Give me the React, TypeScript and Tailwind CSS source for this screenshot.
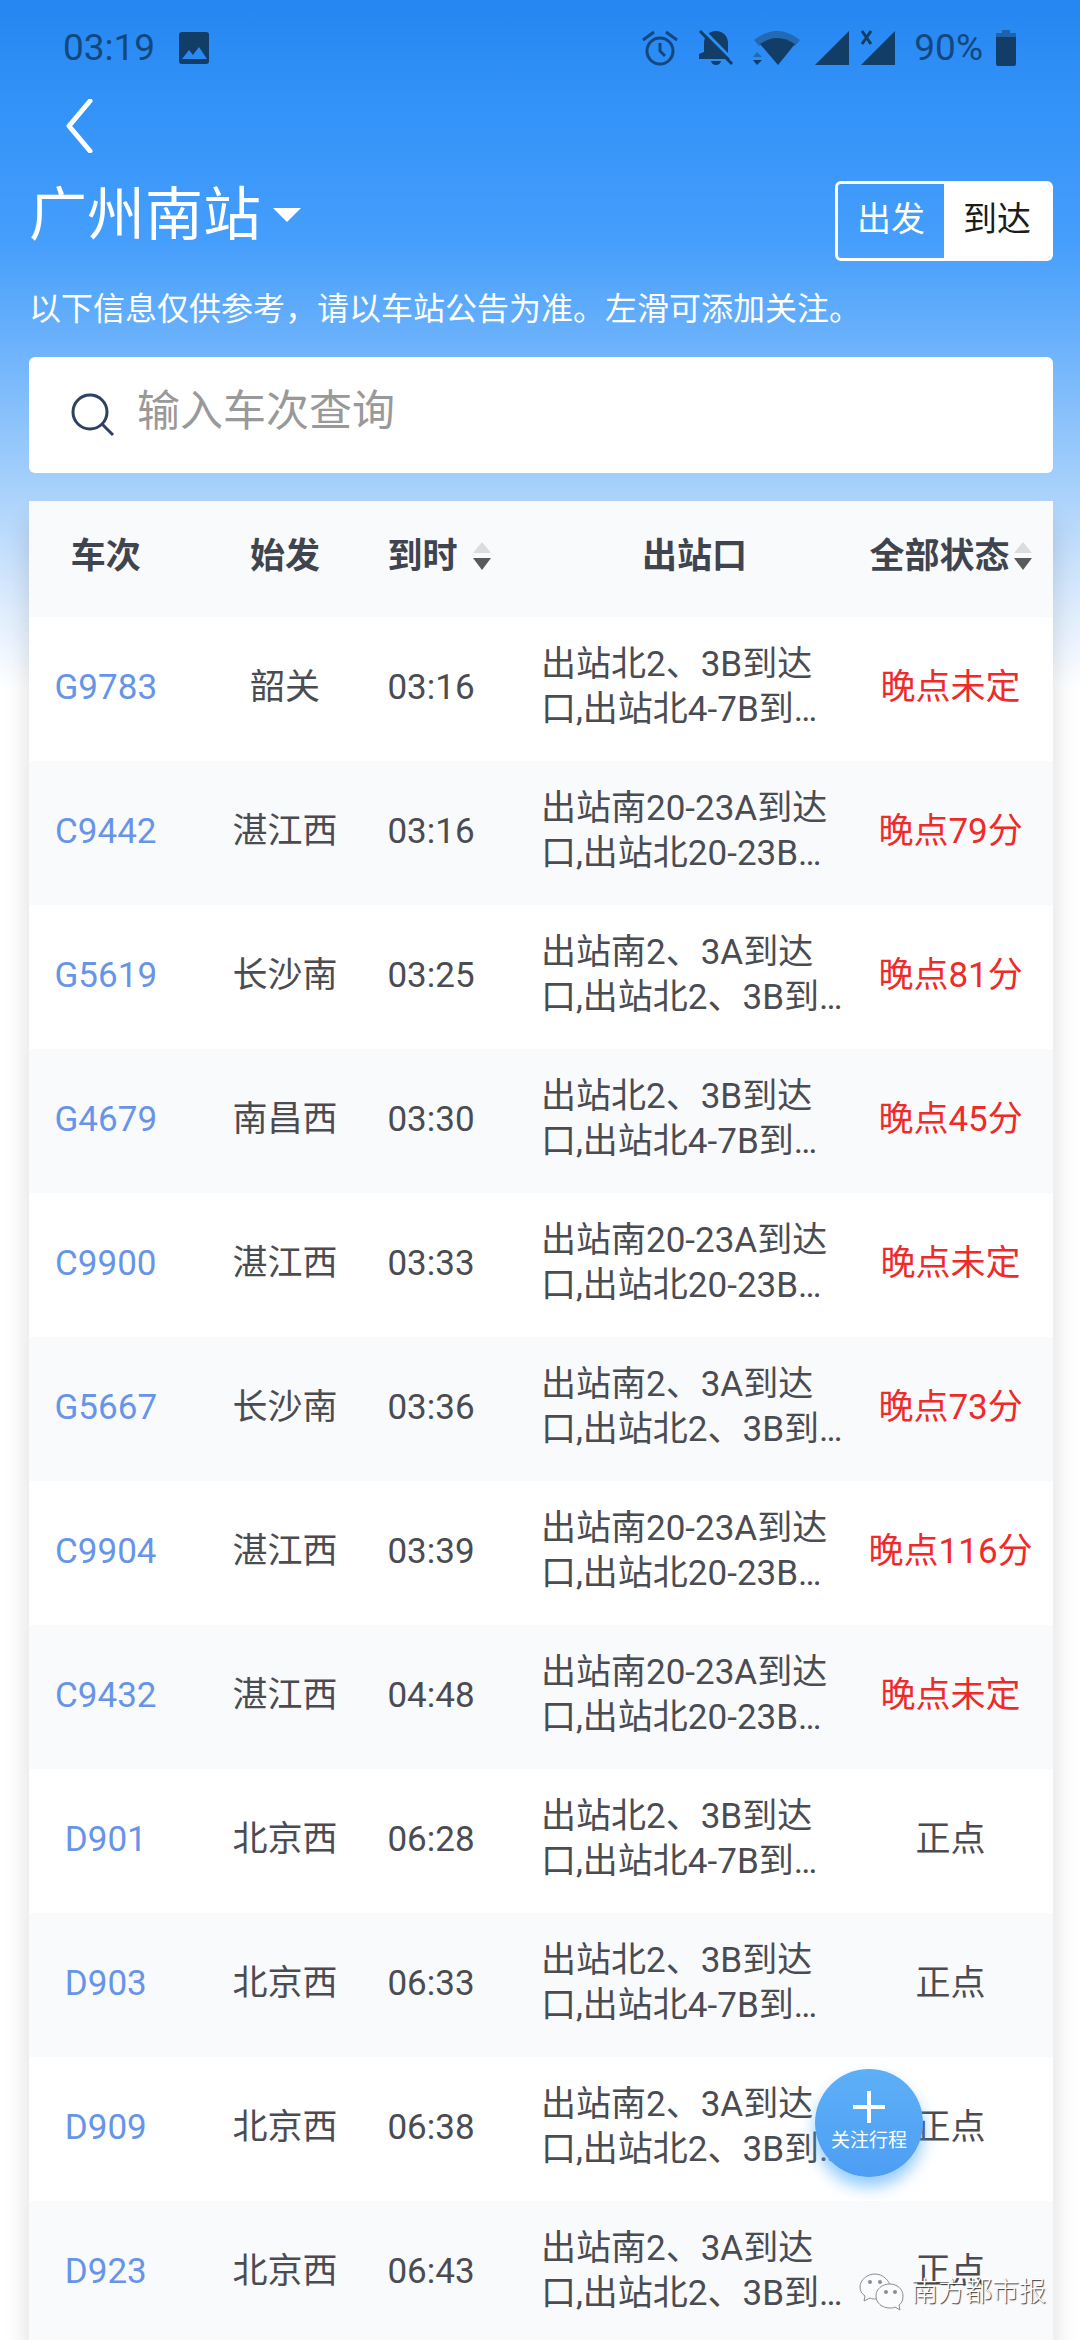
import { useState } from "react";

type Mode = "departure" | "arrival";

interface Train {
  no: string;
  from: string;
  time: string;
  exit: string;
  status: string;
}

const NORTH_A = "出站北2、3B到达口,出站北4-7B到…";
const SOUTH_A = "出站南20-23A到达口,出站北20-23B…";
const SOUTH_B = "出站南2、3A到达口,出站北2、3B到…";

const TRAINS: Train[] = [
  { no: "G9783", from: "韶关", time: "03:16", exit: NORTH_A, status: "晚点未定" },
  { no: "C9442", from: "湛江西", time: "03:16", exit: SOUTH_A, status: "晚点79分" },
  { no: "G5619", from: "长沙南", time: "03:25", exit: SOUTH_B, status: "晚点81分" },
  { no: "G4679", from: "南昌西", time: "03:30", exit: NORTH_A, status: "晚点45分" },
  { no: "C9900", from: "湛江西", time: "03:33", exit: SOUTH_A, status: "晚点未定" },
  { no: "G5667", from: "长沙南", time: "03:36", exit: SOUTH_B, status: "晚点73分" },
  { no: "C9904", from: "湛江西", time: "03:39", exit: SOUTH_A, status: "晚点116分" },
  { no: "C9432", from: "湛江西", time: "04:48", exit: SOUTH_A, status: "晚点未定" },
  { no: "D901", from: "北京西", time: "06:28", exit: NORTH_A, status: "正点" },
  { no: "D903", from: "北京西", time: "06:33", exit: NORTH_A, status: "正点" },
  { no: "D909", from: "北京西", time: "06:38", exit: SOUTH_B, status: "正点" },
  { no: "D923", from: "北京西", time: "06:43", exit: SOUTH_B, status: "正点" },
];

export default function App() {
  const [mode, setMode] = useState<Mode>("arrival");

  return (
    <div className="relative h-dvh overflow-hidden bg-[linear-gradient(180deg,#2586f2_0px,#3292f8_100px,#459efc_240px,#6cb2fb_345px,#a6d0fb_485px,#d6e8fd_590px,#ffffff_690px)] bg-white font-[Roboto,'Noto_Sans_CJK_SC',sans-serif] text-[#4a4c52]">
      <StatusBar />
      <header className="pl-[29px] pr-[27px] text-white">
        <button type="button" aria-label="返回" className="ml-9 mt-7 block">
          <svg className="h-[54px] w-7" viewBox="0 0 28 54" fill="none" stroke="currentColor" strokeWidth="5">
            <path d="M25 2 4 27l21 25" strokeLinecap="round" strokeLinejoin="round" />
          </svg>
        </button>
        <div className="mt-7 flex items-start justify-between">
          <button type="button" className="flex items-center gap-3 text-[58px] leading-[68px]">
            <h1>广州南站</h1>
            <svg className="h-[14px] w-7" viewBox="0 0 28 14" fill="currentColor">
              <path d="M0 0h28L14 14z" />
            </svg>
          </button>
          <ModeToggle mode={mode} onChange={setMode} />
        </div>
        <p className="mt-6 text-[32px] leading-[48px]">
          以下信息仅供参考，请以车站公告为准。左滑可添加关注。
        </p>
      </header>

      <main className="pl-[29px] pr-[27px]">
        <label className="mt-6 flex h-[116px] items-center rounded-md bg-white pl-[42px]">
          <svg className="h-11 w-11 shrink-0" viewBox="0 0 44 44" fill="none" stroke="#2f4160" strokeWidth="3">
            <circle cx="19" cy="19" r="17" />
            <path d="m31 31 11 11" />
          </svg>
          <span className="sr-only">车次</span>
          <input
            type="text"
            placeholder="输入车次查询"
            className="ml-[22px] w-full bg-transparent pb-2 text-[43px] leading-[64px] outline-none placeholder:text-[#999999]"
          />
        </label>
        <TrainTable trains={TRAINS} />
      </main>

      <button
        type="button"
        className="absolute bottom-[163px] right-[157px] flex h-[108px] w-[108px] flex-col items-center rounded-full bg-linear-to-b from-[#5db0f6] to-[#4d9ef4] pt-[22px] text-white shadow-[0_10px_16px_#4aa8ff99]"
      >
        <svg className="h-8 w-8" viewBox="0 0 32 32" stroke="currentColor" strokeWidth="4">
          <path d="M16 0v32M0 16h32" />
        </svg>
        <span className="mt-1 text-[19px] leading-7">关注行程</span>
      </button>
      <Watermark />
    </div>
  );
}

function StatusBar() {
  return (
    <div className="flex h-[71px] items-end justify-between pb-[1px] pl-[63px] pr-[63px] text-[37px] leading-[44px] text-[#13487f]">
      <div className="flex items-center gap-6">
        <span>03:19</span>
        <svg className="h-8 w-[30px]" viewBox="0 0 30 32">
          <rect width="30" height="32" rx="3" fill="#123d66" />
          <path d="m3 27 7-9 4 5 6-8 8 12z" fill="#2a8af4" />
        </svg>
      </div>
      <div className="flex items-center">
        <svg className="h-9 w-9" viewBox="0 0 36 36" fill="none" stroke="#13487f" strokeWidth="3">
          <circle cx="18" cy="21" r="13" />
          <path d="M18 13v8l5 5M1 10 12 2M35 10 24 2" />
        </svg>
        <svg className="ml-5 h-9 w-9" viewBox="0 0 36 36" fill="#123d66">
          <path d="M18 1c7 0 12 5 12 12v12l5 3v1H1v-5l5-2V13C6 6 11 1 18 1zM13 31h10q-1 4-5 4t-5-4z" />
          <path d="M5 0 38 33" stroke="#2d8ff6" strokeWidth="3" />
          <path d="M2 1 34 34" stroke="#123d66" strokeWidth="3" />
        </svg>
        <svg className="ml-[18px] h-9 w-[50px]" viewBox="0 0 50 36" fill="#123d66">
          <path d="M2 10Q25-8 48 10L43 16Q25 2 7 16z" fill="#2469b3" />
          <path d="M8 14Q25 2 43 14L26 35z" />
          <path d="M1 30h9l-5 5z" />
          <path d="M1 27h9l-5-5z" fill="#2469b3" />
        </svg>
        <svg className="ml-3 h-9 w-9" viewBox="0 0 36 36" fill="#123d66">
          <path d="M35 1v34H1z" />
        </svg>
        <svg className="ml-[10px] h-9 w-9" viewBox="0 0 36 36" fill="#123d66">
          <path d="M35 1v34H1z" />
          <path d="m2 1 9 13M11 1 2 14" stroke="#123d66" strokeWidth="3" />
        </svg>
        <span className="ml-[18px]">90%</span>
        <svg className="ml-3 h-9 w-[22px]" viewBox="0 0 22 36">
          <path d="M7 0h8v3h6v6H1V3h6z" fill="#1f62a8" />
          <path d="M1 7h20v27q0 2-2 2H3q-2 0-2-2z" fill="#123d66" />
        </svg>
      </div>
    </div>
  );
}

interface ModeToggleProps {
  mode: Mode;
  onChange: (mode: Mode) => void;
}

function ModeToggle({ mode, onChange }: ModeToggleProps) {
  const options: { key: Mode; label: string }[] = [
    { key: "departure", label: "出发" },
    { key: "arrival", label: "到达" },
  ];

  return (
    <div className="flex h-20 w-[218px] overflow-hidden rounded-md border-[3px] border-white">
      {options.map((o) => (
        <button
          key={o.key}
          type="button"
          aria-pressed={mode === o.key}
          onClick={() => onChange(o.key)}
          className={`flex-1 pb-1 text-[34px] ${mode === o.key ? "bg-white text-[#1c1c1c]" : "text-white"}`}
        >
          {o.label}
        </button>
      ))}
    </div>
  );
}

function SortIcon() {
  return (
    <svg className="h-7 w-[18px] shrink-0" viewBox="0 0 18 28">
      <path d="M9 0 18 11H0z" fill="#dcdcdc" />
      <path d="M9 28 0 16h18z" fill="#5a5a5a" />
    </svg>
  );
}

function TrainTable({ trains }: { trains: Train[] }) {
  return (
    <table className="mt-7 w-full table-fixed text-center text-[35px] leading-[45px] shadow-[0_20px_24px_#00000024]">
      <thead>
        <tr className="h-[116px] bg-[#f9fafc] text-[#40444e]">
          <th className="w-[15%] pb-1.5">车次</th>
          <th className="w-[20%] pb-1.5">始发</th>
          <th className="w-[15%] pb-1.5">
            <button type="button" className="flex items-center gap-4">
              到时
              <SortIcon />
            </button>
          </th>
          <th className="w-[30%] pb-1.5">出站口</th>
          <th className="w-[20%] pb-1.5">
            <button type="button" className="mx-auto flex items-center gap-1 whitespace-nowrap">
              全部状态
              <SortIcon />
            </button>
          </th>
        </tr>
      </thead>
      <tbody>
        {trains.map((t) => (
          <tr key={t.no} className="h-36 bg-white even:bg-[#f9fafc]">
            <td className="pb-1">
              <a href={`#${t.no}`} className="text-[#6894e8]">
                {t.no}
              </a>
            </td>
            <td className="pb-1">{t.from}</td>
            <td className="pb-1 text-left">{t.time}</td>
            <td className="pb-1 pr-1 text-left">{t.exit}</td>
            <td className={`pb-1 ${t.status === "正点" ? "" : "text-[#ee2a2a]"}`}>{t.status}</td>
          </tr>
        ))}
      </tbody>
    </table>
  );
}

function Watermark() {
  return (
    <div className="absolute bottom-7 right-[34px] flex items-center gap-[6px] text-[27px] font-light leading-10 text-white [text-shadow:1px_1px_1px_#333]">
      <svg className="h-10 w-[46px]" viewBox="0 0 46 40" fill="#fbfcfd" stroke="#8a8d92" strokeWidth="1">
        <path d="M16 2C8 2 1 8 1 15c0 4 2 7 5 9l-1 5 6-3c2 1 4 1 6 1 8 0 14-6 14-12S24 2 16 2z" />
        <path d="M31 12c-8 0-14 5-14 12s6 12 14 12c2 0 4 0 5-1l5 3-1-5c3-2 4-5 4-9 0-7-6-12-13-12z" />
        <g fill="#8a8d92" stroke="none">
          <circle cx="11" cy="10" r="2" />
          <circle cx="21" cy="10" r="2" />
          <circle cx="27" cy="20" r="2" />
          <circle cx="36" cy="20" r="2" />
        </g>
      </svg>
      <span>南方都市报</span>
    </div>
  );
}
